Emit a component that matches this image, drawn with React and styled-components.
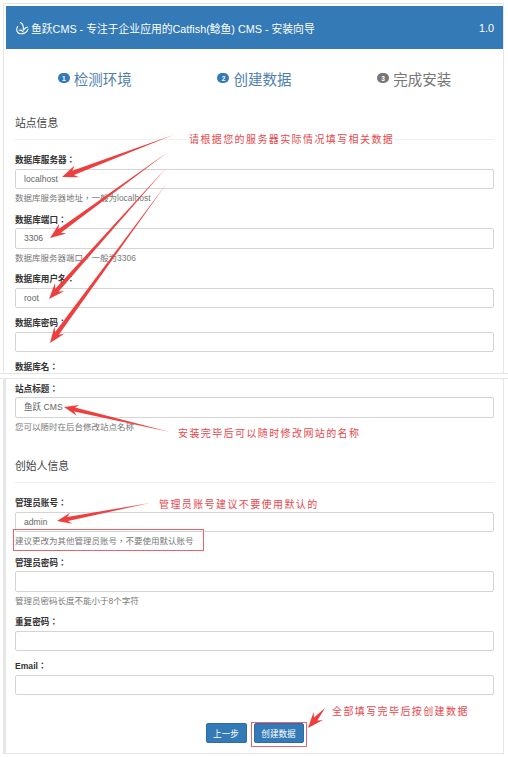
import React from "react";
import styled, { createGlobalStyle } from "styled-components";

const GlobalStyle = createGlobalStyle`
  html, body {
    margin: 0;
    padding: 0;
    background: #fff;
  }
  body {
    font-family: "Liberation Sans", "Noto Sans CJK SC", sans-serif;
    color: #333;
  }
`;

const Page = styled.div`
  position: relative;
  width: 508px;
  height: 757px;
  overflow: hidden;
  box-sizing: border-box;
`;

const Shot = styled.section`
  height: ${(p) => p.$height}px;
  margin-top: ${(p) => p.$top}px;
  box-sizing: border-box;
  border-top: ${(p) => (p.$line === "top" ? "1px solid #e6e6e6" : "0")};
  border-bottom: ${(p) => (p.$line === "bottom" ? "1px solid #e6e6e6" : "0")};
  overflow: hidden;
`;

const Frame = styled.div`
  height: 100%;
  margin: 0 4px 0 3px;
  box-sizing: border-box;
  border: solid #e6e6e6;
  border-width: ${(p) => p.$borders};
  padding: ${(p) => p.$padding};
  overflow: hidden;
`;

const Header = styled.header`
  display: flex;
  align-items: center;
  justify-content: space-between;
  height: 43px;
  padding: 0 9px 0 9px;
  background: #337ab7;
  color: #fff;
  font-size: 10.8px;
`;

const Brand = styled.div`
  display: flex;
  align-items: center;
  gap: 2px;
`;

const Steps = styled.div`
  display: grid;
  grid-template-columns: repeat(3, 1fr);
  margin: 17px 9px 0 9px;
  height: 24px;
  align-items: center;
`;

const Step = styled.div`
  display: flex;
  align-items: center;
  justify-content: center;
  gap: 4px;
  font-size: 14.5px;
  color: ${(p) => (p.$done ? "#777" : "#4f7faf")};
`;

const Badge = styled.span`
  display: inline-flex;
  align-items: center;
  justify-content: center;
  width: 12px;
  height: 10px;
  border-radius: 5px;
  background: ${(p) => (p.$done ? "#777" : "#337ab7")};
  color: #fff;
  font-size: 6.5px;
  font-weight: bold;
`;

const Body = styled.div`
  padding: 0 9px 0 9px;
`;

const SectionTitle = styled.h4`
  margin: ${(p) => p.$top}px 0 5px;
  height: 29px;
  padding-top: 5px;
  box-sizing: border-box;
  font-size: 10.8px;
  line-height: 14px;
  font-weight: normal;
  color: #444;
  border-bottom: 1px solid #eee;
`;

const Field = styled.div`
  padding-top: ${(p) => (p.$flush ? 0 : 7)}px;
  font-family: "Liberation Sans", "Noto Sans CJK TC", sans-serif;
`;

const Label = styled.label`
  display: block;
  height: 14px;
  margin-bottom: 2.5px;
  font-size: 8.6px;
  line-height: 16px;
  font-weight: bold;
  color: #333;
`;

const Input = styled.div`
  height: 20.5px;
  box-sizing: border-box;
  padding-left: 8px;
  border: 1px solid #d4d4d4;
  border-radius: 2px;
  background: #fff;
  font-family: "Liberation Sans", "Noto Sans CJK SC", sans-serif;
  font-size: 8.6px;
  line-height: 18px;
  color: #666;
`;

const Help = styled.p`
  margin: 0;
  height: 15.5px;
  font-size: 8.5px;
  line-height: 19px;
  color: #777;
`;

const Actions = styled.div`
  display: flex;
  justify-content: center;
  gap: 7px;
  margin-top: 28px;
`;

const Button = styled.button`
  width: ${(p) => p.$width}px;
  height: 20px;
  padding: 0;
  border: 1px solid #2e6da4;
  border-radius: 2px;
  background: #337ab7;
  color: #fff;
  font-family: inherit;
  font-size: 8.6px;
`;

const Note = styled.span`
  position: absolute;
  left: ${(p) => p.$x}px;
  top: ${(p) => p.$y}px;
  font-size: 10px;
  line-height: 14px;
  letter-spacing: 1.4px;
  white-space: nowrap;
  color: #e8474c;
  background: ${(p) => (p.$clear ? "#fff" : "transparent")};
`;

const Mark = styled.div`
  position: absolute;
  left: ${(p) => p.$x}px;
  top: ${(p) => p.$y}px;
  width: ${(p) => p.$w}px;
  height: ${(p) => p.$h}px;
  box-sizing: border-box;
  border: 1px solid #e8646c;
`;

const ArrowLayer = styled.svg`
  position: absolute;
  left: 0;
  top: 0;
  pointer-events: none;
`;

// tapered annotation arrow, thin at the tail and barbed at the tip
const arrowPoints = ([tx, ty], [hx, hy], w) => {
  const len = Math.hypot(hx - tx, hy - ty);
  const ux = (hx - tx) / len;
  const uy = (hy - ty) / len;
  const nx = -uy;
  const ny = ux;
  const head = w * 3.6;
  const bx = hx - ux * head;
  const by = hy - uy * head;
  const nbx = hx - ux * head * 0.75;
  const nby = hy - uy * head * 0.75;
  const pts = [
    [tx, ty],
    [nbx + (nx * w) / 2, nby + (ny * w) / 2],
    [bx + nx * w * 1.4, by + ny * w * 1.4],
    [hx, hy],
    [bx - nx * w * 1.4, by - ny * w * 1.4],
    [nbx - (nx * w) / 2, nby - (ny * w) / 2],
  ];
  return pts.map((p) => p.map((v) => v.toFixed(1)).join(",")).join(" ");
};

const arrows = [
  { from: [173, 135], to: [62, 177], w: 4.4 },
  { from: [168, 152], to: [50, 238], w: 4.4 },
  { from: [167, 167], to: [49, 299], w: 4.4 },
  { from: [167, 183], to: [50, 343], w: 4.4 },
  { from: [170, 432], to: [64, 407], w: 4 },
  { from: [150, 503], to: [57, 521], w: 4 },
  { from: [325, 708], to: [308, 728], w: 4.4 },
];

const FishLogo = () => (
  <svg width="14" height="14" viewBox="0 0 14 14" fill="none" stroke="#fff" strokeWidth="1.1" strokeLinecap="round">
    <path d="M2.6 5.5C.6 8.6 2 12.6 5.6 12.8c3.4.2 6-1.6 7.4-4.4" />
    <path d="M5.4 1.6c2.4 1.4 3.4 3.8 2.8 7" />
    <path d="M4.2 9.2c1.6-.4 3 .2 4 1.8" />
    <path d="M8.6 9c1-1.6 2.2-2.6 4-3" />
  </svg>
);

const firstFields = [
  { label: "数据库服务器：", value: "localhost", help: "数据库服务器地址，一般为localhost" },
  { label: "数据库端口：", value: "3306", help: "数据库服务器端口，一般为3306" },
  { label: "数据库用户名：", value: "root" },
  { label: "数据库密码：" },
  { label: "数据库名：" },
];

const ownerFields = [
  { label: "管理员账号：", value: "admin", help: "建议更改为其他管理员账号，不要使用默认账号" },
  { label: "管理员密码：", help: "管理员密码长度不能小于8个字符" },
  { label: "重复密码：" },
  { label: "Email：" },
];

const FormField = ({ label, value, help, flush }) => (
  <Field $flush={flush}>
    <Label>{label}</Label>
    <Input>{value}</Input>
    {help && <Help>{help}</Help>}
  </Field>
);

export default function App() {
  return (
    <Page>
      <GlobalStyle />
      <Shot $top={3} $height={371} $line="bottom">
        <Frame $borders="1px 1px 0 1px" $padding="2px 0 0 2px">
          <Header>
            <Brand>
              <FishLogo />
              鱼跃CMS - 专注于企业应用的Catfish(鲶鱼) CMS - 安装向导
            </Brand>
            <span>1.0</span>
          </Header>
          <Steps>
            <Step><Badge>1</Badge>检测环境</Step>
            <Step><Badge>2</Badge>创建数据</Step>
            <Step $done><Badge $done>3</Badge>完成安装</Step>
          </Steps>
          <Body>
            <SectionTitle $top={21}>站点信息</SectionTitle>
            {firstFields.map((f) => (
              <FormField key={f.label} {...f} />
            ))}
          </Body>
        </Frame>
      </Shot>
      <Shot $top={4} $height={376} $line="top">
        <Frame $borders="0 1px 1px 3px" $padding="1.5px 9px 0 9px">
          <FormField flush label="站点标题：" value="鱼跃 CMS" help="您可以随时在后台修改站点名称" />
          <SectionTitle $top={21}>创始人信息</SectionTitle>
          {ownerFields.map((f) => (
            <FormField key={f.label} {...f} />
          ))}
          <Actions>
            <Button $width={41}>上一步</Button>
            <Button $width={50}>创建数据</Button>
          </Actions>
        </Frame>
      </Shot>

      <ArrowLayer width="508" height="757">
        {arrows.map((a) => (
          <polygon key={a.to.join()} points={arrowPoints(a.from, a.to, a.w)} fill="#ee3f3f" />
        ))}
      </ArrowLayer>
      <Note $x={189} $y={133} $clear>请根据您的服务器实际情况填写相关数据</Note>
      <Note $x={178} $y={427} $clear>安装完毕后可以随时修改网站的名称</Note>
      <Note $x={159} $y={498}>管理员账号建议不要使用默认的</Note>
      <Note $x={332} $y={705}>全部填写完毕后按创建数据</Note>
      <Mark $x={13} $y={529} $w={191} $h={22} />
      <Mark $x={251} $y={722} $w={56} $h={25} />
    </Page>
  );
}
